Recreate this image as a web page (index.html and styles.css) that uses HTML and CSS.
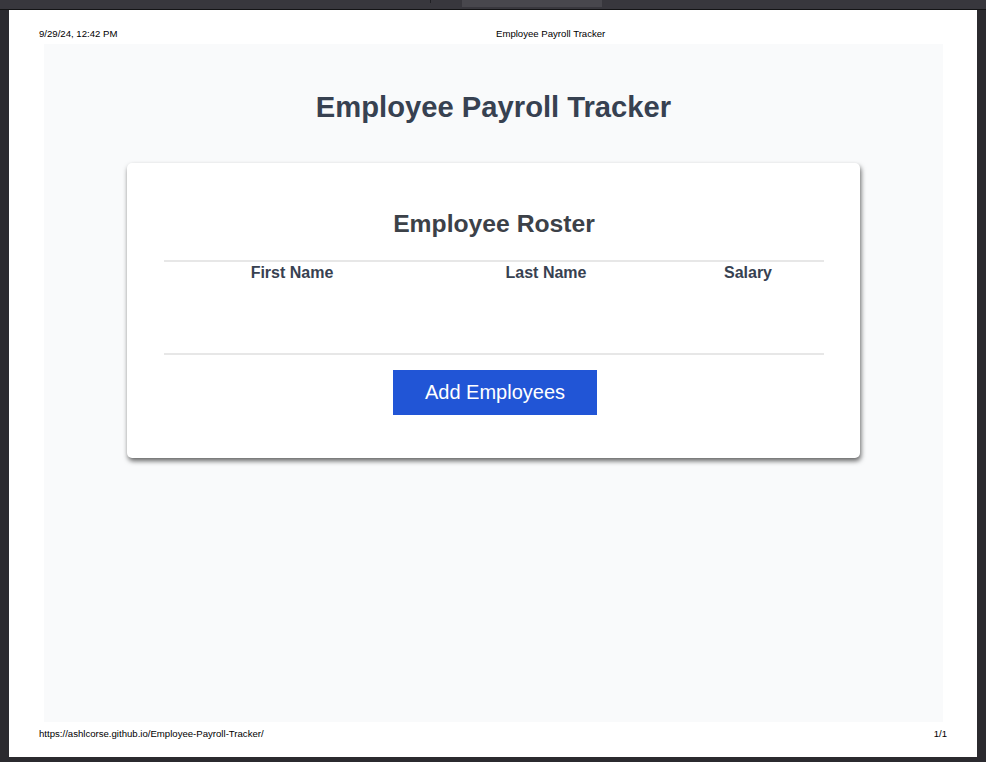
FILE: index.html
```html
<!DOCTYPE html>
<html lang="en">
<head>
<meta charset="utf-8">
<title>Employee Payroll Tracker</title>
<link rel="stylesheet" href="styles.css">
</head>
<body>
<div class="topbar">
  <div class="tab-mark"></div>
  <div class="tab"></div>
</div>
<div class="topline"></div>
<div class="viewer">
  <div class="page">
    <div class="print-header">
      <span class="ph-date">9/29/24, 12:42 PM</span>
      <span class="ph-title">Employee Payroll Tracker</span>
    </div>
    <main class="content">
      <h1 class="title">Employee Payroll Tracker</h1>
      <section class="card">
        <h2 class="card-title">Employee Roster</h2>
        <table class="roster">
          <thead>
            <tr>
              <th class="col-first">First Name</th>
              <th class="col-last">Last Name</th>
              <th class="col-salary">Salary</th>
            </tr>
          </thead>
          <tbody>
            <tr class="empty-row"><td colspan="3"></td></tr>
          </tbody>
        </table>
        <div class="actions">
          <button class="add-btn" type="button">Add Employees</button>
        </div>
      </section>
    </main>
    <div class="print-footer">
      <span>https://ashlcorse.github.io/Employee-Payroll-Tracker/</span>
      <span>1/1</span>
    </div>
  </div>
</div>
<div class="bottombar"></div>
</body>
</html>
```

FILE: styles.css
```css
html, body {
  margin: 0;
  padding: 0;
}

body {
  background: #2b2a2f;
  width: 986px;
  height: 762px;
  overflow: hidden;
  font-family: "Liberation Sans", Arial, sans-serif;
}

.topbar {
  height: 9px;
  background: #38373d;
  display: flex;
  align-items: flex-start;
}

.tab-mark {
  width: 1px;
  height: 3px;
  margin-left: 430px;
  background: #202024;
}

.tab {
  width: 140px;
  height: 7px;
  margin-left: 31px;
  background: #48474d;
}

.topline {
  height: 1px;
  background: #141416;
}

.viewer {
  display: flex;
  padding: 0 9px;
}

.page {
  width: 968px;
  height: 747px;
  background: #ffffff;
  display: flex;
  flex-direction: column;
}

.print-header {
  height: 34px;
  box-sizing: border-box;
  padding: 18px 0 0 30px;
  display: flex;
  font-size: 9.6px;
  line-height: 11px;
  color: #000;
}

.ph-date {
  width: 457px;
}

.content {
  height: 678px;
  margin: 0 34px 0 35px;
  background: #f9fafb;
  display: flex;
  flex-direction: column;
  align-items: center;
}

.title {
  margin: 46px 0 39px;
  font-size: 29.2px;
  line-height: 34px;
  font-weight: 700;
  color: #374151;
}

.card {
  width: 733px;
  box-sizing: border-box;
  padding: 47px 36px 43px 37px;
  background: #ffffff;
  border-radius: 5px;
  box-shadow: 1px 3px 5px rgba(0, 0, 0, 0.6);
  display: flex;
  flex-direction: column;
  align-items: center;
}

.card-title {
  margin: 0 0 22px;
  font-size: 24.7px;
  line-height: 28px;
  font-weight: 700;
  color: #3c4148;
}

.roster {
  width: 660px;
  border-collapse: collapse;
  border-top: 2px solid #e7e7e7;
  border-bottom: 2px solid #e7e7e7;
  table-layout: fixed;
}

.roster th {
  padding: 2px 0 0;
  font-size: 16px;
  line-height: 18px;
  font-weight: 700;
  color: #374151;
  text-align: center;
}

.col-first { width: 256px; }
.col-last { width: 252px; }
.col-salary { width: 152px; }

.empty-row td {
  height: 71px;
  padding: 0;
}

.actions {
  margin-top: 15px;
  margin-left: 2px;
  display: flex;
  justify-content: center;
}

.add-btn {
  width: 204px;
  height: 45px;
  border: none;
  border-radius: 0;
  background: #2155d6;
  color: #ffffff;
  font-family: "Liberation Sans", Arial, sans-serif;
  font-size: 20px;
  line-height: 23px;
  padding: 0;
}

.print-footer {
  padding: 6px 30px 0 30px;
  display: flex;
  justify-content: space-between;
  font-size: 9.6px;
  line-height: 11px;
  color: #000;
}

.bottombar {
  height: 5px;
}
```
